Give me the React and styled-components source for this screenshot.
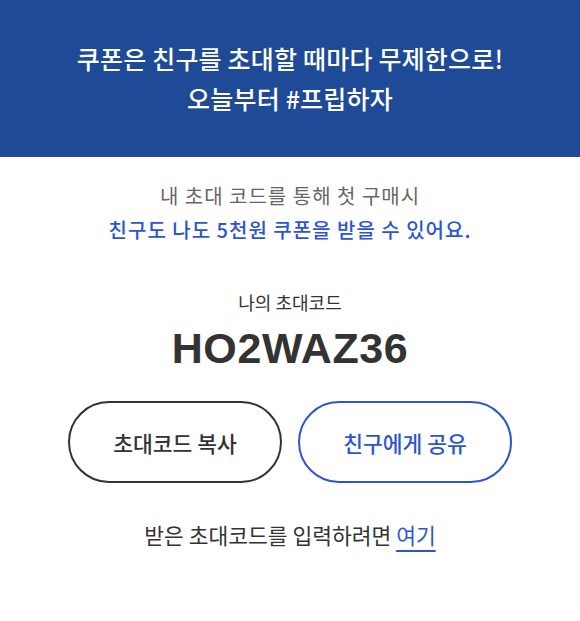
import React from "react";
import styled, { createGlobalStyle } from "styled-components";

const Global = createGlobalStyle`
  html, body { margin: 0; padding: 0; background: #fff; }
  body { font-family: "Noto Sans CJK KR", "Noto Sans", sans-serif; }
  * { box-sizing: border-box; }
`;

const Page = styled.div`
  width: 580px;
  min-height: 621px;
  display: flex;
  flex-direction: column;
  background: #fff;
`;

const Banner = styled.header`
  background: #1e4a98;
  color: #fff;
  height: 157px;
  padding-top: 38px;
  text-align: center;
  font-size: 25px;
  font-weight: 500;
  line-height: 40px;
  letter-spacing: 0.2px;
`;

const Line = styled.div``;

const Content = styled.main`
  display: flex;
  flex-direction: column;
  align-items: center;
  padding-top: 22px;
`;

const Intro = styled.div`
  text-align: center;
  line-height: 34px;
  font-size: 20px;
  letter-spacing: 1px;
`;

const IntroLine = styled.div`
  color: ${(p) => (p.$accent ? "#2d55d2" : "#666")};
  font-weight: ${(p) => (p.$accent ? 500 : 400)};
`;

const Label = styled.div`
  margin-top: 43px;
  font-size: 18px;
  line-height: 24px;
  color: #333;
`;

const Code = styled.div`
  margin-top: 9px;
  font-family: "Liberation Sans", Arial, sans-serif;
  font-size: 43px;
  font-weight: 700;
  line-height: 50px;
  color: #333;
  letter-spacing: 0.6px;
`;

const Buttons = styled.div`
  margin-top: 28px;
  display: flex;
  gap: 16px;
`;

const Button = styled.button`
  width: 214px;
  height: 82px;
  border-radius: 41px;
  background: #fff;
  border: 2px solid ${(p) => (p.$primary ? "#2d55d2" : "#333")};
  color: ${(p) => (p.$primary ? "#2d55d2" : "#333")};
  font-family: "Noto Sans CJK KR", sans-serif;
  font-size: 21.5px;
  font-weight: 500;
  cursor: pointer;
  padding: 0;
`;

const Footer = styled.div`
  margin-top: 38px;
  font-size: 21.5px;
  line-height: 28px;
  color: #333;
`;

const Link = styled.a`
  color: #2d55d2;
  text-decoration: underline;
  text-decoration-thickness: 2px;
  text-underline-offset: 6px;
  cursor: pointer;
`;

export default function App() {
  return (
    <>
      <Global />
      <Page>
        <Banner>
          <Line>쿠폰은 친구를 초대할 때마다 무제한으로!</Line>
          <Line>오늘부터 #프립하자</Line>
        </Banner>
        <Content>
          <Intro>
            <IntroLine>내 초대 코드를 통해 첫 구매시</IntroLine>
            <IntroLine $accent>친구도 나도 5천원 쿠폰을 받을 수 있어요.</IntroLine>
          </Intro>
          <Label>나의 초대코드</Label>
          <Code>HO2WAZ36</Code>
          <Buttons>
            <Button>초대코드 복사</Button>
            <Button $primary>친구에게 공유</Button>
          </Buttons>
          <Footer>
            받은 초대코드를 입력하려면 <Link>여기</Link>
          </Footer>
        </Content>
      </Page>
    </>
  );
}
